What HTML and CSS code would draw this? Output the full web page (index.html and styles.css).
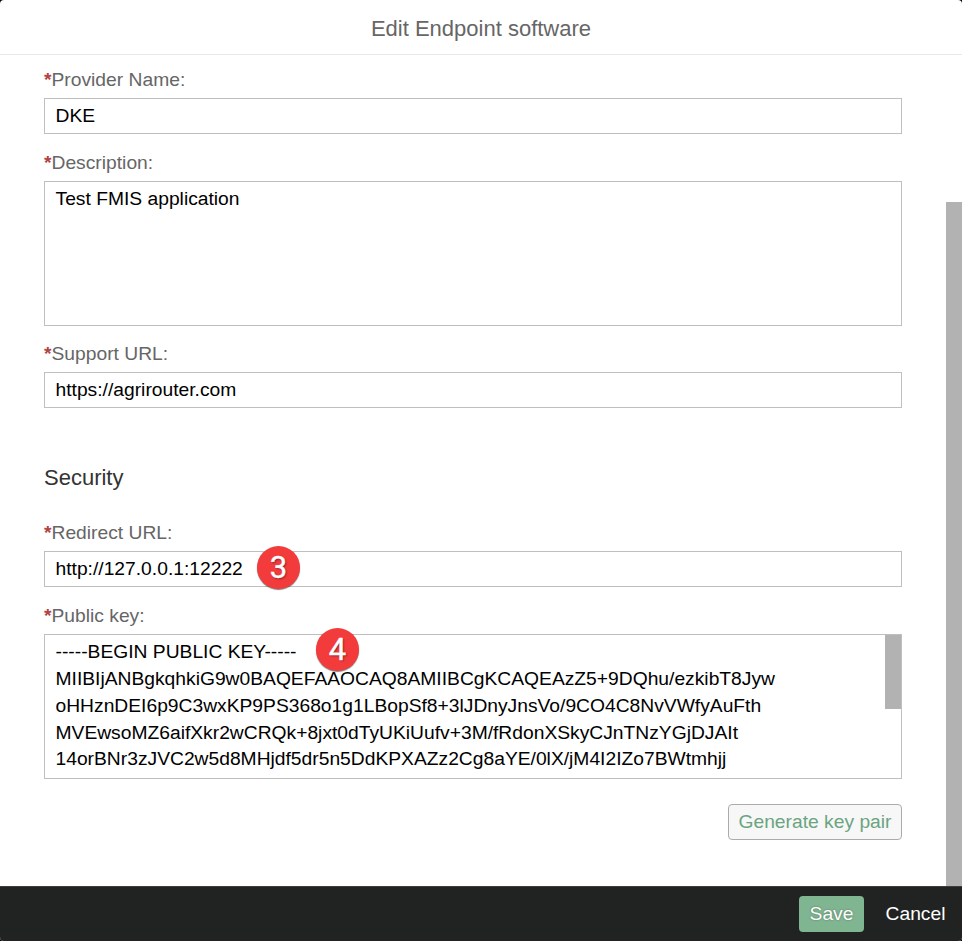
FILE: index.html
```html
<!DOCTYPE html>
<html lang="en">
<head>
<meta charset="utf-8">
<title>Edit Endpoint software</title>
<link rel="stylesheet" href="styles.css">
</head>
<body>
<div class="dialog">
  <header class="dialog-header"><h1>Edit Endpoint software</h1></header>
  <main class="dialog-body">
    <form class="form">
      <div class="field">
        <div class="label"><span class="required">*</span>Provider Name:</div>
        <div class="control">DKE</div>
      </div>
      <div class="field field-description">
        <div class="label"><span class="required">*</span>Description:</div>
        <div class="control control-area">Test FMIS application</div>
      </div>
      <div class="field">
        <div class="label"><span class="required">*</span>Support URL:</div>
        <div class="control">https://agrirouter.com</div>
      </div>
      <h2 class="section-title">Security</h2>
      <div class="field">
        <div class="label"><span class="required">*</span>Redirect URL:</div>
        <div class="control">http://127.0.0.1:12222<span class="badge badge-redirect">3</span></div>
      </div>
      <div class="field">
        <div class="label"><span class="required">*</span>Public key:</div>
        <div class="control control-area control-key">
          <div class="key-text"><div>-----BEGIN PUBLIC KEY-----</div><div>MIIBIjANBgkqhkiG9w0BAQEFAAOCAQ8AMIIBCgKCAQEAzZ5+9DQhu/ezkibT8Jyw</div><div>oHHznDEI6p9C3wxKP9PS368o1g1LBopSf8+3lJDnyJnsVo/9CO4C8NvVWfyAuFth</div><div>MVEwsoMZ6aifXkr2wCRQk+8jxt0dTyUKiUufv+3M/fRdonXSkyCJnTNzYGjDJAIt</div><div>14orBNr3zJVC2w5d8MHjdf5dr5n5DdKPXAZz2Cg8aYE/0lX/jM4I2IZo7BWtmhjj</div></div>
          <div class="key-scrollbar"></div>
          <span class="badge badge-key">4</span>
        </div>
      </div>
      <div class="form-actions"><button type="button" class="button button-default">Generate key pair</button></div>
    </form>
    <div class="scrollbar"></div>
  </main>
  <footer class="dialog-footer">
    <button type="button" class="button button-save">Save</button>
    <button type="button" class="button button-cancel">Cancel</button>
  </footer>
</div>
</body>
</html>
```

FILE: styles.css
```css
* {
  box-sizing: border-box;
}

body {
  margin: 0;
  background: #000;
  font-family: "Liberation Sans", Arial, sans-serif;
  font-size: 19.25px;
  color: #000;
}

.dialog {
  display: flex;
  flex-direction: column;
  height: 941px;
  border-radius: 4px;
  overflow: hidden;
  background: #fff;
}

.dialog-header {
  height: 55px;
  flex: none;
  border-bottom: 1px solid #e8e8e8;
  text-align: center;
}

.dialog-header h1 {
  margin: 0;
  font-size: 22px;
  font-weight: 400;
  line-height: 58px;
  color: #666;
}

.dialog-body {
  flex: 1;
  display: flex;
  justify-content: space-between;
}

.form {
  width: 902px;
  padding: 9px 0 0 44px;
}

.field {
  margin-bottom: 13px;
}

.field-description {
  margin-bottom: 12px;
}

.label {
  height: 34px;
  line-height: 32px;
  color: #666;
}

.required {
  font-weight: 700;
  color: #b04343;
}

.control {
  position: relative;
  height: 36px;
  padding: 0 10.5px;
  border: 1px solid #bfbfbf;
  line-height: 34px;
}

.control-area {
  height: 145px;
}

.section-title {
  height: 40px;
  margin: 50px 0 19px;
  font-size: 22px;
  font-weight: 400;
  line-height: 40px;
  color: #333;
}

.control-key {
  display: flex;
  justify-content: space-between;
  padding: 3.9px 0 0 10.5px;
  line-height: 26.87px;
}

.key-scrollbar {
  width: 16px;
  height: 74px;
  margin-top: -3.9px;
  background: #b2b2b2;
}

.badge {
  position: absolute;
  width: 43px;
  height: 43px;
  border-radius: 50%;
  background: #f33b3c;
  box-shadow: 0 1px 1px rgba(0, 0, 0, 0.5);
  font-family: Roboto, sans-serif;
  font-size: 31px;
  font-weight: 400;
  -webkit-text-stroke: 0.4px #fff;
  line-height: 43px;
  text-align: center;
  color: #fff;
  text-shadow: 1px 1px 2px rgba(0, 0, 0, 0.45);
}

.badge-redirect {
  left: 212px;
  top: -6px;
}

.badge-key {
  left: 271px;
  top: -7px;
}

.form-actions {
  display: flex;
  justify-content: flex-end;
  margin-top: 25px;
}

.button {
  height: 36px;
  padding: 0;
  border: 0;
  border-radius: 4px;
  font: inherit;
  line-height: 34px;
}

.button-default {
  width: 174px;
  border: 1px solid #ababab;
  background: #f7f7f7;
  color: #6ba480;
}

.scrollbar {
  width: 16px;
  margin-top: 147px;
  background: #b2b2b2;
}

.dialog-footer {
  display: flex;
  flex: none;
  height: 55px;
  padding: 9px 11px 0 0;
  justify-content: flex-end;
  gap: 16px;
  border-top: 1px solid #3c3e3d;
  background: #212322;
}

.button-save {
  width: 65px;
  background: #80b591;
  color: #fff;
  text-shadow: 0 0 2px rgba(0, 0, 0, 0.4);
}

.button-cancel {
  width: 71px;
  background: transparent;
  color: #fff;
}
```
